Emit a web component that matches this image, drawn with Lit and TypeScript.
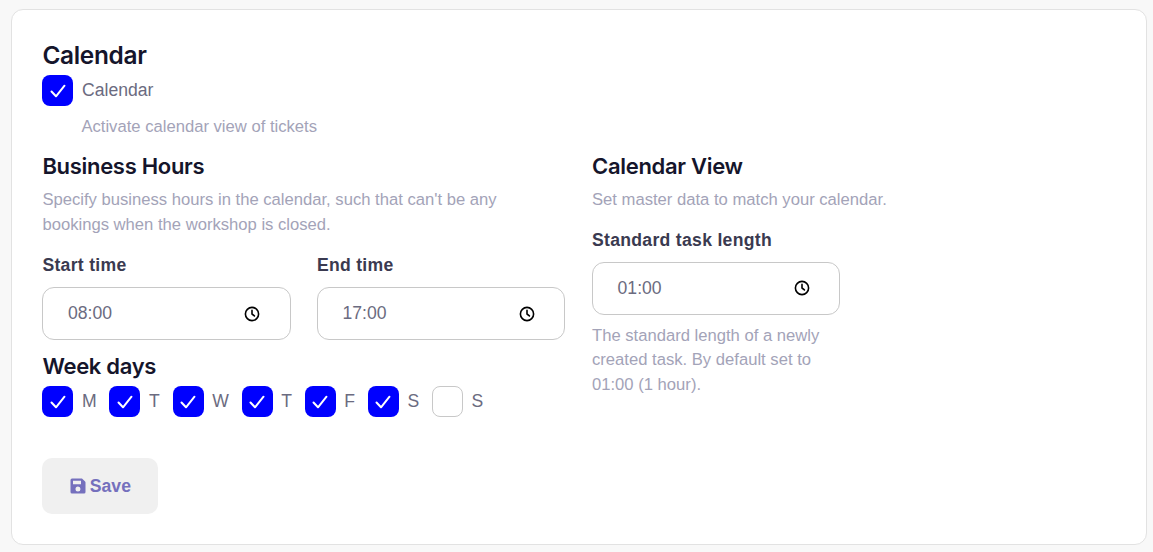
import { LitElement, html, css, svg } from 'lit';
import { customElement } from 'lit/decorators.js';

const DAYS = [
  { label: 'M', on: true },
  { label: 'T', on: true },
  { label: 'W', on: true },
  { label: 'T', on: true },
  { label: 'F', on: true },
  { label: 'S', on: true },
  { label: 'S', on: false },
];

const clockIcon = svg`<svg class="clock" width="16" height="16" viewBox="0 0 16 16" fill="none" stroke="#000" stroke-width="1.6" stroke-linecap="round" stroke-linejoin="round"><circle cx="8" cy="8" r="6.6"/><path d="M8 4.4V8l2.4 1.9"/></svg>`;

@customElement('app-root')
export class AppRoot extends LitElement {
  static styles = css`
    :host {
      display: block;
      min-height: 552px;
      box-sizing: border-box;
      padding: 9px 6px 7px 11px;
      background: #f8f8f8;
      font-family: 'Liberation Sans', Arial, sans-serif;
      font-size: 17.6px;
      color: #6b6b80;
    }

    .card {
      box-sizing: border-box;
      height: 536px;
      padding: 30px 30px 30px 30.4px;
      background: #fff;
      border: 1px solid #e2e2e2;
      border-radius: 12px;
    }

    h2,
    h3 {
      margin: 0;
      color: #15152b;
      font-family: Inter, 'Liberation Sans', sans-serif;
      font-weight: 600;
      line-height: 30px;
      letter-spacing: -0.3px;
    }

    h2 {
      font-size: 24.4px;
    }

    h3 {
      font-size: 22px;
    }

    .check-row {
      display: flex;
      align-items: center;
      gap: 8.7px;
      margin-top: 5px;
    }

    .box {
      display: flex;
      flex: none;
      align-items: center;
      justify-content: center;
      box-sizing: border-box;
      width: 31px;
      height: 31px;
      border-radius: 8px;
      background: #0000ff;
    }

    .box.off {
      background: #fff;
      border: 1px solid #c8c8c8;
    }

    .activate {
      margin: 9px 0 0 39px;
      color: #a3a3b8;
      font-size: 16.64px;
      line-height: 24px;
    }

    .columns {
      display: flex;
      gap: 26.6px;
      margin-top: 12px;
    }

    .left {
      width: 523px;
    }

    .right {
      width: 248.4px;
    }

    .hint {
      margin: 7px 0 0;
      color: #a3a3b8;
      font-size: 16.64px;
      line-height: 24.6px;
    }

    .nowrap {
      white-space: nowrap;
    }

    .times {
      display: flex;
      gap: 26px;
      margin-top: 16px;
    }

    .field {
      flex: 1;
    }

    .right .field {
      margin-top: 15px;
    }

    label {
      display: block;
      color: #3a3a50;
      font-weight: 700;
      line-height: 24px;
      letter-spacing: 0.3px;
    }

    .time {
      display: flex;
      align-items: center;
      justify-content: space-between;
      box-sizing: border-box;
      height: 53px;
      margin-top: 10px;
      padding: 0 29.6px 0 24.6px;
      border: 1px solid #c8c8c8;
      border-radius: 12px;
      color: #6b6b80;
    }

    .clock {
      flex: none;
    }

    .right .field + .hint {
      margin-top: 9px;
    }

    .week-title {
      margin-top: 11px;
    }

    .days {
      display: flex;
      gap: 12.7px;
      margin-top: 5px;
    }

    .day {
      display: flex;
      align-items: center;
      gap: 8.7px;
    }

    .save {
      display: flex;
      align-items: center;
      justify-content: center;
      gap: 4px;
      width: 116px;
      height: 56px;
      margin-top: 41px;
      padding: 0;
      border: none;
      border-radius: 10px;
      background: #f0f0f0;
      color: #7570bd;
      font: 700 17.6px 'Liberation Sans', Arial, sans-serif;
    }
  `;

  private renderBox(on: boolean) {
    return html`<span class="box ${on ? '' : 'off'}">
      ${on
        ? svg`<svg width="16" height="14" viewBox="0 0 16 14" fill="none" stroke="#fff" stroke-width="2" stroke-linecap="round" stroke-linejoin="round"><path d="M1.5 7.5L6 12.3L14.5 1.7"/></svg>`
        : ''}
    </span>`;
  }

  private renderTime(value: string) {
    return html`<div class="time"><span>${value}</span>${clockIcon}</div>`;
  }

  render() {
    return html`
      <div class="card">
        <h2>Calendar</h2>
        <div class="check-row">${this.renderBox(true)}<span>Calendar</span></div>
        <p class="activate">Activate calendar view of tickets</p>

        <div class="columns">
          <div class="left">
            <h3>Business Hours</h3>
            <p class="hint">
              Specify business hours in the calendar, such that can't be any<br />bookings when the
              workshop is closed.
            </p>
            <div class="times">
              <div class="field"><label>Start time</label>${this.renderTime('08:00')}</div>
              <div class="field"><label>End time</label>${this.renderTime('17:00')}</div>
            </div>
            <h3 class="week-title">Week days</h3>
            <div class="days">
              ${DAYS.map(
                (d) => html`<div class="day">${this.renderBox(d.on)}<span>${d.label}</span></div>`,
              )}
            </div>
          </div>
          <div class="right">
            <h3>Calendar View</h3>
            <p class="hint nowrap">Set master data to match your calendar.</p>
            <div class="field">
              <label>Standard task length</label>
              ${this.renderTime('01:00')}
            </div>
            <p class="hint">
              The standard length of a newly<br />created task. By default set to<br />01:00 (1 hour).
            </p>
          </div>
        </div>

        <button class="save">
          <svg width="16" height="16" viewBox="0 0 16 16" fill="#7570bd">
            <path
              fill-rule="evenodd"
              d="M2 0.5h9.4c.4 0 .8.2 1.1.4l2.6 2.6c.3.3.4.7.4 1.1V14a1.5 1.5 0 0 1-1.5 1.5H2A1.5 1.5 0 0 1 .5 14V2A1.5 1.5 0 0 1 2 .5zM3 2.8v3.4h8V2.8zM8 8.6a2.5 2.5 0 1 0 0 5 2.5 2.5 0 0 0 0-5z"
            />
          </svg>
          Save
        </button>
      </div>
    `;
  }
}
